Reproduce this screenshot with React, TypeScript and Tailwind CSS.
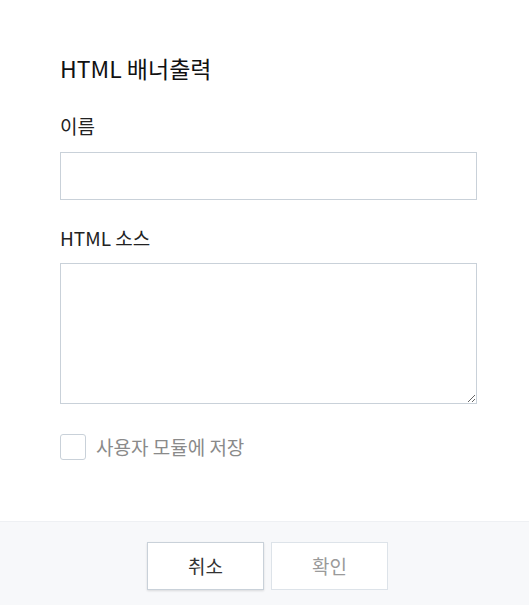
export default function App() {
  return (
    <div
      className="w-[529px] h-[605px] bg-white flex flex-col text-[#222]"
      style={{ fontFamily: '"Noto Sans CJK KR", "Noto Sans", sans-serif' }}
    >
      <div className="flex-1 pl-[60px] pr-[52px] pt-[51px]">
        <h2 className="text-[23px] leading-[34px] font-normal text-[#111]">HTML 배너출력</h2>

        <label className="block mt-[28px] text-[19px] leading-[26px] text-[#222]">이름</label>
        <input
          type="text"
          className="mt-[13px] block w-full h-[48px] border border-[#c9d1d9] bg-white outline-none"
        />

        <label className="block mt-[25px] text-[19px] leading-[26px] text-[#222]">HTML 소스</label>
        <textarea className="mt-[12px] block w-full h-[141px] border border-[#c9d1d9] bg-white outline-none resize-y" />

        <label className="mt-[29px] flex items-center gap-[10px]">
          <span className="w-[26px] h-[26px] rounded-[3px] border border-[#c9d1d9] bg-white" />
          <span className="text-[19px] text-[#8a8a8a]">사용자 모듈에 저장</span>
        </label>
      </div>

      <div className="h-[84px] bg-[#f7f8fa] border-t border-[#eef0f3] flex items-start justify-center gap-[7px] pt-[20px] pl-[6px]">
        <button className="w-[117px] h-[48px] bg-white border border-[#c9d1d9] shadow-[0_1px_2px_rgba(0,0,0,0.12)] text-[19px] font-normal text-[#333]">
          취소
        </button>
        <button className="w-[117px] h-[48px] bg-white border border-[#dde3e9] text-[19px] font-normal text-[#9a9a9a]">
          확인
        </button>
      </div>
    </div>
  );
}
